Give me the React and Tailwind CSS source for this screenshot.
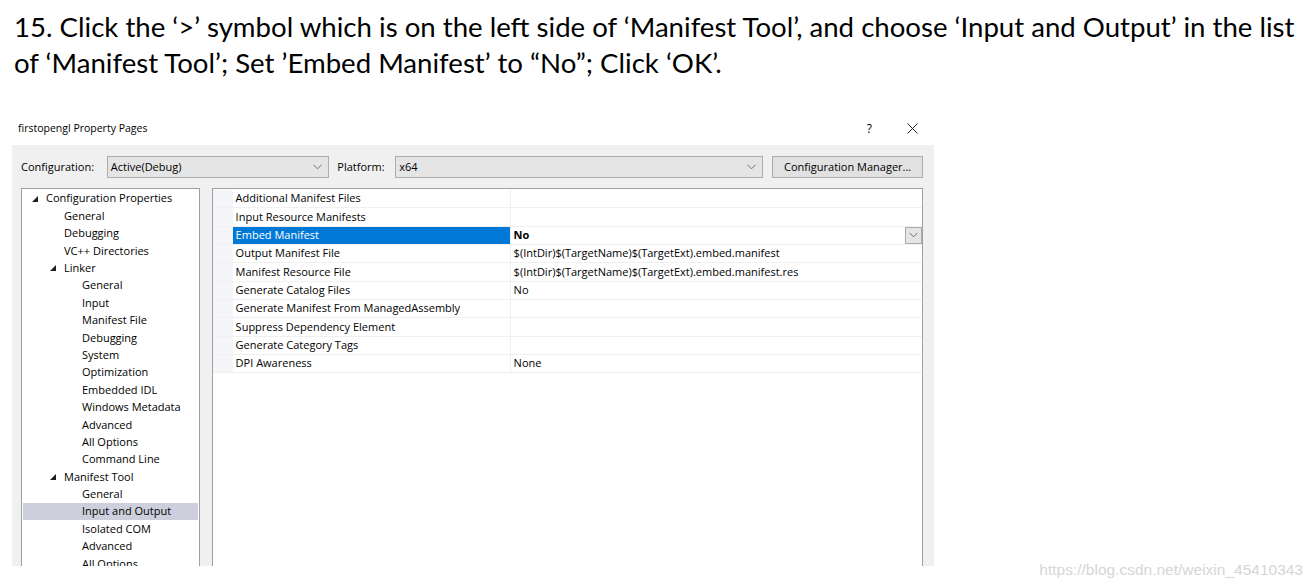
import React from "react";

const treeItems = [
  { label: "Configuration Properties", level: 0, open: true },
  { label: "General", level: 1 },
  { label: "Debugging", level: 1 },
  { label: "VC++ Directories", level: 1 },
  { label: "Linker", level: 1, open: true },
  { label: "General", level: 2 },
  { label: "Input", level: 2 },
  { label: "Manifest File", level: 2 },
  { label: "Debugging", level: 2 },
  { label: "System", level: 2 },
  { label: "Optimization", level: 2 },
  { label: "Embedded IDL", level: 2 },
  { label: "Windows Metadata", level: 2 },
  { label: "Advanced", level: 2 },
  { label: "All Options", level: 2 },
  { label: "Command Line", level: 2 },
  { label: "Manifest Tool", level: 1, open: true },
  { label: "General", level: 2 },
  { label: "Input and Output", level: 2, selected: true },
  { label: "Isolated COM", level: 2 },
  { label: "Advanced", level: 2 },
  { label: "All Options", level: 2 },
];

const props = [
  { name: "Additional Manifest Files", value: "" },
  { name: "Input Resource Manifests", value: "" },
  { name: "Embed Manifest", value: "No", selected: true },
  { name: "Output Manifest File", value: "$(IntDir)$(TargetName)$(TargetExt).embed.manifest" },
  { name: "Manifest Resource File", value: "$(IntDir)$(TargetName)$(TargetExt).embed.manifest.res" },
  { name: "Generate Catalog Files", value: "No" },
  { name: "Generate Manifest From ManagedAssembly", value: "" },
  { name: "Suppress Dependency Element", value: "" },
  { name: "Generate Category Tags", value: "" },
  { name: "DPI Awareness", value: "None" },
];

const indent = ["pl-[23px]", "pl-[41px]", "pl-[59px]"];

function Chevron({ className = "" }) {
  return (
    <svg width="9" height="6" viewBox="0 0 9 6" className={className}>
      <path d="M0.5 0.8 L4.5 4.8 L8.5 0.8" fill="none" stroke="#6d6d6d" strokeWidth="1" />
    </svg>
  );
}

function Expander() {
  return (
    <svg width="6" height="6" viewBox="0 0 6 6" className="shrink-0">
      <polygon points="6,0 6,6 0,6" fill="#1e1e1e" />
    </svg>
  );
}

function Combo({ width, text }) {
  return (
    <div
      className={`${width} h-[22px] flex items-center justify-between bg-[#e5e5e5] border border-[#acacac] pl-[3px] pr-[6px]`}
    >
      <span>{text}</span>
      <Chevron />
    </div>
  );
}

export default function App() {
  return (
    <div className="relative w-[1313px] h-[588px] bg-white overflow-hidden">
      <p className="pt-[9px] pl-[14px] pr-[4px] text-[27.6px] leading-[36px] text-black font-['Lato',sans-serif]">
        15. Click the ‘&gt;’ symbol which is on the left side of ‘Manifest Tool’, and choose ‘Input and Output’ in the list of ‘Manifest Tool’; Set ’Embed Manifest’ to “No”; Click ‘OK’.
      </p>

      <div className="ml-[12px] mt-[31px] w-[922px] h-[454px] overflow-hidden flex flex-col font-['Open_Sans',sans-serif] text-[11px] text-black">
        <div className="h-[33px] shrink-0 flex items-center justify-between bg-white pl-[6px] pr-[16px]">
          <span className="text-[10.5px]">firstopengl Property Pages</span>
          <div className="flex items-center gap-[35px]">
            <span className="text-[12px]">?</span>
            <svg width="11" height="11" viewBox="0 0 11 11">
              <path d="M0.5 0.5 L10.5 10.5 M10.5 0.5 L0.5 10.5" stroke="#222" strokeWidth="1" />
            </svg>
          </div>
        </div>

        <div className="flex-1 bg-[#f0f0f0] pl-[9px] pr-[11px] pt-[11px] flex flex-col">
          <div className="flex items-center h-[22px]">
            <span className="w-[86px]">Configuration:</span>
            <Combo width="w-[223px]" text="Active(Debug)" />
            <span className="ml-[8px] w-[58px]">Platform:</span>
            <Combo width="w-[369px]" text="x64" />
            <button className="ml-[9px] w-[151px] h-[22px] bg-[#e1e1e1] border border-[#adadad] text-center">
              Configuration Manager...
            </button>
          </div>

          <div className="flex gap-[12px] mt-[10px] flex-1 min-h-0">
            <div className="w-[179px] bg-white border border-[#a0a0a0] pt-[1px] px-[1px] overflow-hidden">
              {treeItems.map((item, i) => (
                <div
                  key={i}
                  className={`h-[17.4px] flex items-center ${indent[item.level]} ${
                    item.selected ? "bg-[#cdd0dc]" : ""
                  }`}
                >
                  {item.open && (
                    <span className="-ml-[14px] mr-[8px] flex items-center">
                      <Expander />
                    </span>
                  )}
                  <span>{item.label}</span>
                </div>
              ))}
            </div>

            <div className="w-[713px] bg-white border border-[#a0a0a0] pt-[1px] overflow-hidden">
              {props.map((p, i) => (
                <div key={i} className="h-[18.33px] flex border-b border-[#f0f0f0]">
                  <div className="w-[20px] shrink-0 bg-[#f3f5f9]" />
                  <div
                    className={`w-[278px] shrink-0 flex items-center pl-[3px] border-r border-[#f0f0f0] ${
                      p.selected ? "bg-[#0078d7] text-white" : ""
                    }`}
                  >
                    {p.name}
                  </div>
                  <div className="flex-1 flex items-center justify-between pl-[3px]">
                    <span className={p.selected ? "font-bold" : ""}>{p.value}</span>
                    {p.selected && (
                      <div className="w-[17px] h-[17px] bg-[#e5e5e5] border border-[#acacac] flex items-center justify-center">
                        <Chevron />
                      </div>
                    )}
                  </div>
                </div>
              ))}
            </div>
          </div>
        </div>
      </div>

      <span className="absolute right-[10px] bottom-[7px] text-[15.5px] text-[#d6d6d6] font-['Liberation_Sans',sans-serif]">
        https://blog.csdn.net/weixin_45410343
      </span>
    </div>
  );
}
